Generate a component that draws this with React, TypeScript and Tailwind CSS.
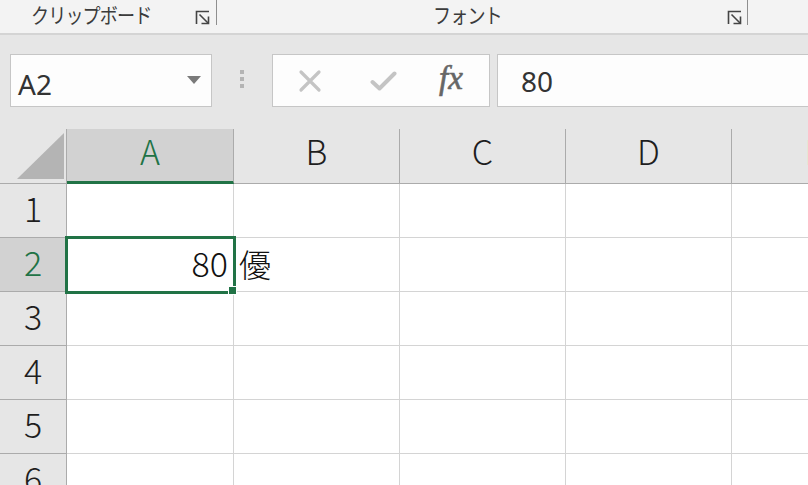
import React from "react";

const FONT = { fontFamily: '"Noto Sans CJK JP", "Noto Sans", sans-serif' };

function Launcher() {
  return (
    <svg width="16" height="16" viewBox="0 0 16 16" fill="none" stroke="#444" strokeWidth="1.6">
      <path d="M1.5 14V1.5H14" />
      <path d="M4.5 4.5L13 13" />
      <path d="M6.5 13.5H13.5V6.5" />
    </svg>
  );
}

const cols = ["A", "B", "C", "D", "E"];
const colW = ["w-[167px]", "w-[166px]", "w-[166px]", "w-[166px]", "w-[166px]"];

export default function App() {
  return (
    <div className="w-[808px] h-[485px] overflow-hidden bg-[#e6e6e6] relative" style={FONT}>
      {/* Ribbon labels */}
      <div className="h-[35px] bg-[#f3f3f3] border-b-2 border-[#d4d4d4] flex">
        <div className="w-[218px] flex items-start relative">
          <span className="ml-[31px] mt-[1px] text-[21px] leading-[27px] tracking-[-1px] text-[#3b3b3b] scale-x-[0.86] origin-left whitespace-nowrap">クリップボード</span>
          <span className="absolute left-[195px] top-[10px]"><Launcher /></span>
          <span className="absolute left-[216px] top-0 w-[1px] h-[25px] bg-[#8e8e8e]" />
        </div>
        <div className="w-[531px] flex items-start relative">
          <span className="ml-[215px] mt-[1px] text-[21px] leading-[27px] tracking-[-1px] text-[#3b3b3b] scale-x-[0.86] origin-left whitespace-nowrap">フォント</span>
          <span className="absolute left-[509px] top-[10px]"><Launcher /></span>
          <span className="absolute left-[529px] top-0 w-[1px] h-[25px] bg-[#8e8e8e]" />
        </div>
      </div>

      {/* Formula bar */}
      <div className="h-[94px] flex items-start pt-[19px]">
        <div className="ml-[10px] w-[202px] h-[53px] border border-[#c6c6c6] bg-[#fdfdfd] flex items-center">
          <span className="ml-[7px] mt-[6px] text-[28px] text-[#333]" style={{ fontFamily: '"Noto Sans", sans-serif' }}>A2</span>
          <svg className="ml-auto mr-[10px] mt-[-2px]" width="14" height="8" viewBox="0 0 14 8">
            <path d="M0 0H14L7 8Z" fill="#7a7a7a" />
          </svg>
        </div>
        <div className="ml-[28px] mt-[16px] flex flex-col gap-[3px]">
          <span className="w-[4px] h-[4px] bg-[#b4b4b4]" />
          <span className="w-[4px] h-[4px] bg-[#b4b4b4]" />
          <span className="w-[4px] h-[4px] bg-[#b4b4b4]" />
        </div>
        <div className="ml-[28px] w-[218px] h-[53px] border border-[#c6c6c6] bg-[#fdfdfd] flex items-center">
          <svg className="ml-[25px]" width="24" height="24" viewBox="0 0 24 24" stroke="#c4c4c4" strokeWidth="3.2" strokeLinecap="round">
            <path d="M3 3L21 21M21 3L3 21" />
          </svg>
          <svg className="ml-[48px]" width="27" height="22" viewBox="0 0 27 22" fill="none" stroke="#c4c4c4" strokeWidth="4" strokeLinecap="round" strokeLinejoin="round">
            <path d="M2.5 12L9.5 18.5L24.5 3.5" />
          </svg>
          <span className="ml-[42px] mt-[-4px] text-[33px] italic text-[#666]" style={{ fontFamily: '"Liberation Serif", "DejaVu Serif", serif', WebkitTextStroke: "0.6px #666" }}>fx</span>
        </div>
        <div className="ml-[7px] flex-1 h-[53px] border border-[#c6c6c6] border-r-0 bg-[#fdfdfd] flex items-center">
          <span className="ml-[23px] text-[28px] text-[#333]" style={{ fontFamily: '"Noto Sans", sans-serif' }}>80</span>
        </div>
      </div>

      {/* Column headers */}
      <div className="h-[55px] flex">
        <div className="w-[67px] h-full border-r border-b border-[#ababab] relative shrink-0">
          <svg className="absolute left-0 top-0" width="66" height="54" viewBox="0 0 66 54">
            <path d="M17 50H64V4Z" fill="#b4b4b4" />
          </svg>
        </div>
        {cols.map((c, i) =>
          i === 0 ? (
            <div key={c} className={`${colW[i]} shrink-0 h-full bg-[#d2d2d2] border-r border-[#ababab] border-b-[3px] border-b-[#217346] flex items-center justify-center pb-[9px] text-[34px] font-light text-[#217346]`}>
              {c}
            </div>
          ) : (
            <div key={c} className={`${colW[i]} shrink-0 h-full border-r border-b border-[#ababab] flex items-center justify-center pb-[11px] text-[34px] font-light text-[#1e1e1e]`}>
              {c}
            </div>
          )
        )}
      </div>

      {/* Rows */}
      {[1, 2, 3, 4, 5, 6].map((r) => (
        <div key={r} className="h-[54px] flex">
          <div
            className={
              r === 2
                ? "w-[67px] shrink-0 h-full bg-[#d2d2d2] border-r border-b border-[#ababab] flex items-center justify-center pb-[7px] text-[34px] font-light text-[#217346]"
                : "w-[67px] shrink-0 h-full bg-[#e6e6e6] border-r border-b border-[#ababab] flex items-center justify-center pb-[7px] text-[34px] font-light text-[#1e1e1e]"
            }
          >
            {r}
          </div>
          {cols.map((c, i) => (
            <div key={c} className={`${colW[i]} shrink-0 h-full bg-white border-r border-b border-[#d4d4d4] flex items-center pb-[4px]`}>
              {r === 2 && i === 0 && <span className="ml-auto mr-[5px] text-[34px] font-light text-[#111]">80</span>}
              {r === 2 && i === 1 && <span className="ml-[5px] text-[32px] font-light text-[#111]">優</span>}
            </div>
          ))}
        </div>
      ))}

      {/* Selection box */}
      <div className="absolute left-[65px] top-[236px] w-[171px] h-[58px] border-[3px] border-[#217346] pointer-events-none" />
      <div className="absolute left-[228px] top-[286px] w-[9px] h-[9px] bg-[#217346] border border-white" />
    </div>
  );
}
